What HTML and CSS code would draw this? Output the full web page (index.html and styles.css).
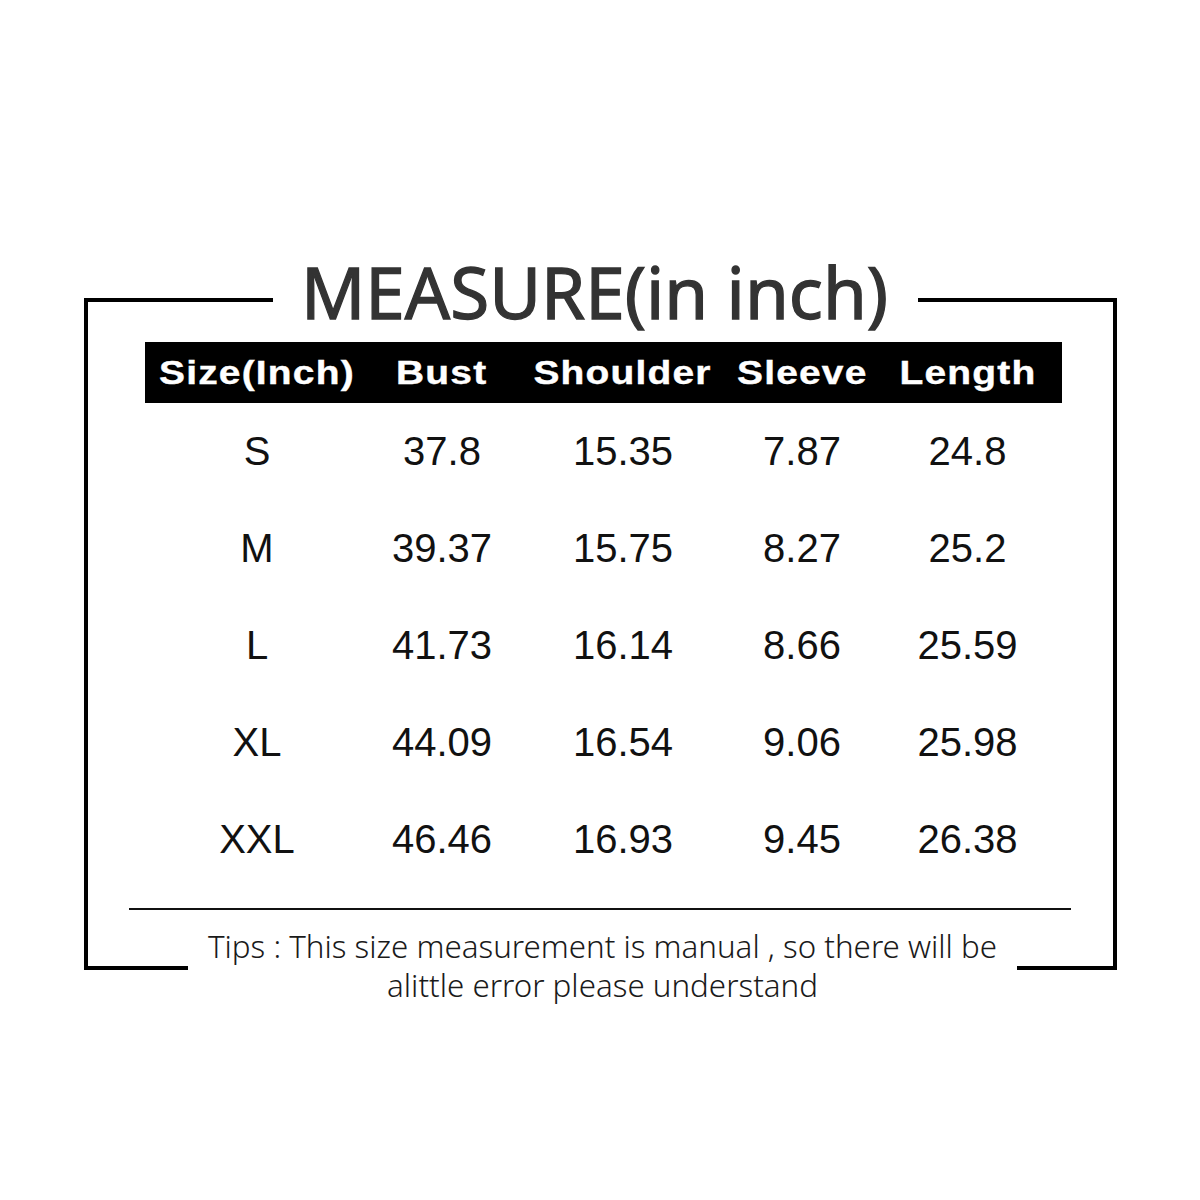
FILE: index.html
```html
<!DOCTYPE html>
<html lang="en">
<head>
<meta charset="utf-8">
<title>MEASURE(in inch)</title>
<link rel="stylesheet" href="styles.css">
</head>
<body>
<div class="page">
  <div class="frame">
    <div class="title-row">
      <h1 class="title">MEASURE(in inch)</h1>
    </div>
    <div class="table">
      <div class="head">
        <span class="th"><span class="th-text">Size(Inch)</span></span>
        <span class="th"><span class="th-text">Bust</span></span>
        <span class="th"><span class="th-text">Shoulder</span></span>
        <span class="th"><span class="th-text">Sleeve</span></span>
        <span class="th"><span class="th-text">Length</span></span>
      </div>
      <div class="row"><span>S</span><span>37.8</span><span>15.35</span><span>7.87</span><span>24.8</span></div>
      <div class="row"><span>M</span><span>39.37</span><span>15.75</span><span>8.27</span><span>25.2</span></div>
      <div class="row"><span>L</span><span>41.73</span><span>16.14</span><span>8.66</span><span>25.59</span></div>
      <div class="row"><span>XL</span><span>44.09</span><span>16.54</span><span>9.06</span><span>25.98</span></div>
      <div class="row"><span>XXL</span><span>46.46</span><span>16.93</span><span>9.45</span><span>26.38</span></div>
    </div>
    <div class="rule"></div>
    <p class="tips">Tips : This size measurement is manual , so there will be<br>alittle error please understand</p>
  </div>
</div>
</body>
</html>
```

FILE: styles.css
```css
html, body {
  margin: 0;
  padding: 0;
  background: #ffffff;
}

.page {
  width: 1200px;
  height: 1200px;
  padding-top: 298px;
  box-sizing: border-box;
}

.frame {
  margin-left: 84px;
  width: 1033px;
  box-sizing: border-box;
  border: 4px solid #000;
  display: flex;
  flex-direction: column;
}

.title-row {
  display: flex;
  justify-content: center;
  margin-top: -50px;
}

.title {
  margin: 0 10px 0 0;
  background: #fff;
  padding: 0 30px 0 28px;
  font-family: "Noto Sans", "Open Sans", sans-serif;
  font-weight: 400;
  font-size: 71px;
  line-height: 80px;
  color: #333333;
  -webkit-text-stroke: 1.3px #333333;
  white-space: nowrap;
}

.table {
  margin-top: 10px;
  margin-left: 57px;
  width: 917px;
}

.head,
.row {
  display: grid;
  grid-template-columns: 224px 146px 216px 142px 189px;
}

.head {
  background: #000;
  height: 61px;
}

.th {
  display: flex;
  justify-content: center;
  font-family: "Liberation Sans", Arial, sans-serif;
  font-weight: 700;
  font-size: 33px;
  line-height: 61px;
  color: #ffffff;
  white-space: nowrap;
}

.th-text {
  display: inline-block;
  letter-spacing: 1px;
  transform: scaleX(1.18);
  -webkit-text-stroke: 0.4px #ffffff;
}

.row span {
  text-align: center;
  font-family: "Liberation Sans", Arial, sans-serif;
  font-size: 40px;
  line-height: 97px;
  color: #111111;
}

.rule {
  margin-top: 20px;
  margin-left: 41px;
  width: 942px;
  height: 2px;
  background: #111;
}

.tips {
  margin: 17px 0 -39px 100px;
  width: 829px;
  background: #fff;
  text-align: center;
  font-family: "Noto Sans", "Open Sans", sans-serif;
  font-weight: 300;
  font-size: 31.3px;
  line-height: 39px;
  color: #1a1a1a;
}
```
